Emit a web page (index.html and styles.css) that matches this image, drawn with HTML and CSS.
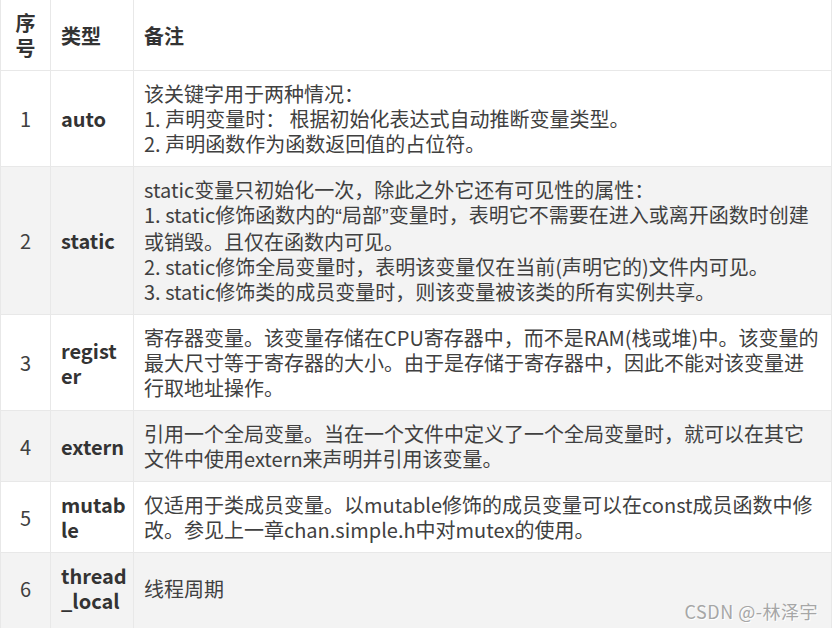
FILE: index.html
```html
<!DOCTYPE html>
<html lang="zh-CN">
<head>
    <meta charset="UTF-8">
    <meta name="viewport" content="width=device-width, initial-scale=1.0">
    <title>C++ 存储类说明符</title>
    <link rel="stylesheet" href="styles.css">
</head>
<body>
    <div class="table-wrap">
        <table class="spec-table">
            <colgroup>
                <col class="col-no">
                <col class="col-type">
                <col class="col-note">
            </colgroup>
            <thead>
                <tr>
                    <th class="no">序号</th>
                    <th>类型</th>
                    <th>备注</th>
                </tr>
            </thead>
            <tbody>
                <tr>
                    <td class="no">1</td>
                    <td class="type">auto</td>
                    <td>该关键字用于两种情况：<br>1. 声明变量时： 根据初始化表达式自动推断变量类型。<br>2. 声明函数作为函数返回值的占位符。</td>
                </tr>
                <tr>
                    <td class="no">2</td>
                    <td class="type">static</td>
                    <td>static变量只初始化一次，除此之外它还有可见性的属性：<br>1. static修饰函数内的<span class="quote">“局部”</span>变量时，表明它不需要在进入或离开函数时创建或销毁。且仅在函数内可见。<br>2. static修饰全局变量时，表明该变量仅在当前(声明它的)文件内可见。<br>3. static修饰类的成员变量时，则该变量被该类的所有实例共享。</td>
                </tr>
                <tr>
                    <td class="no">3</td>
                    <td class="type">regist<br>er</td>
                    <td>寄存器变量。该变量存储在CPU寄存器中，而不是RAM(栈或堆)中。该变量的最大尺寸等于寄存器的大小。由于是存储于寄存器中，因此不能对该变量进行取地址操作。</td>
                </tr>
                <tr>
                    <td class="no">4</td>
                    <td class="type">extern</td>
                    <td>引用一个全局变量。当在一个文件中定义了一个全局变量时，就可以在其它文件中使用extern来声明并引用该变量。</td>
                </tr>
                <tr>
                    <td class="no">5</td>
                    <td class="type">mutab<br>le</td>
                    <td>仅适用于类成员变量。以mutable修饰的成员变量可以在const成员函数中修改。参见上一章chan.simple.h中对mutex的使用。</td>
                </tr>
                <tr>
                    <td class="no">6</td>
                    <td class="type">thread<br>_local</td>
                    <td>线程周期</td>
                </tr>
            </tbody>
        </table>
        <span class="watermark">CSDN @-林泽宇</span>
    </div>
</body>
</html>
```

FILE: styles.css
```css
body {
    margin: 0;
    padding: 0;
    background: #fff;
    font-family: "Noto Sans CJK SC", sans-serif;
    color: #404040;
}

.table-wrap {
    position: relative;
    width: 832px;
}

.spec-table {
    width: 832px;
    table-layout: fixed;
    border-collapse: collapse;
    font-size: 20px;
    line-height: 25px;
}

.col-no {
    width: 50px;
}

.col-type {
    width: 83px;
}

.spec-table th,
.spec-table td {
    border: 1px solid #e8e8e8;
    padding: 10px 10px;
    text-align: left;
    vertical-align: middle;
    word-break: break-all;
}

.spec-table th {
    font-weight: bold;
    color: #333;
}

.spec-table thead th {
    border-top: none;
}

.spec-table .no {
    text-align: center;
}

.spec-table .type {
    font-weight: bold;
    color: #333;
    white-space: nowrap;
}

/* narrow western quotes, as in the original font */
.quote {
    font-family: "Liberation Sans", "Noto Sans CJK SC", sans-serif;
}

.spec-table tbody tr:nth-child(even) {
    background-color: #f3f3f3;
}

/* last row is cut by the bottom of the shot */
.spec-table tbody tr:last-child td {
    padding-bottom: 17px;
    border-bottom: none;
}

.watermark {
    position: absolute;
    right: 14px;
    bottom: 8px;
    font-size: 18px;
    line-height: 22px;
    letter-spacing: 0.5px;
    color: #a6a6a6;
    text-shadow: 1px 1px 0 #fff;
}
```
